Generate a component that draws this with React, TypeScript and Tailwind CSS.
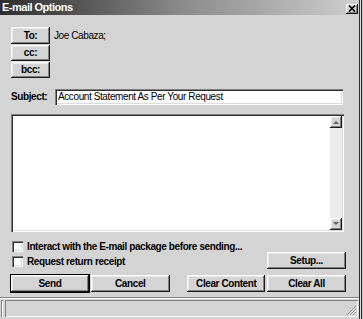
import React from "react";

const txt = "text-[10px] tracking-[-0.4px] leading-none";
const btn =
  "flex items-center justify-center bg-[#d4d4d4] text-black font-bold " +
  txt +
  " shadow-[inset_-1px_-1px_#1a1a1a,inset_1px_1px_#ffffff,inset_-2px_-2px_#808080,inset_2px_2px_#e8e8e8]";
const sunken =
  "bg-white shadow-[inset_1px_1px_#808080,inset_2px_2px_#303030,inset_-1px_-1px_#ffffff,inset_-2px_-2px_#dcdcdc]";

function CheckBox() {
  return <div className={"w-[11px] h-[11px] shrink-0 " + sunken} />;
}

export default function App() {
  return (
    <div
      className="w-[363px] h-[319px] flex bg-[#c8c8c8] overflow-hidden"
      style={{ fontFamily: '"Liberation Sans", Arial, sans-serif' }}
    >
      <div className="w-[360px] h-full flex flex-col bg-[#d4d4d4] border-r border-[#303030]">
        {/* Title bar */}
        <div className="h-[15px] flex items-center justify-between pl-[2px] pr-[1px] bg-gradient-to-r from-[#2e2e2e] via-[#8a8a8a] to-[#cfcfcf]">
          <span className={"text-white font-bold text-[11px] tracking-[-0.5px] leading-none"}>E-mail Options</span>
          <div className="w-[12px] h-[10px] mt-[2px] flex items-center justify-center bg-[#d4d4d4] shadow-[inset_-1px_-1px_#1a1a1a,inset_1px_1px_#ffffff,inset_-2px_-2px_#808080]">
            <svg width="8" height="7" viewBox="0 0 8 7">
              <path d="M1 0.5 L7 6.5 M7 0.5 L1 6.5" stroke="#000" strokeWidth="1.6" />
            </svg>
          </div>
        </div>

        <div className="flex-1 flex flex-col pl-[11px] pr-[13px]">
          {/* Recipients */}
          <div className="mt-[12px] flex">
            <div className="w-[39px] flex flex-col gap-[1px]">
              <div className={btn + " h-[17px]"}>To:</div>
              <div className={btn + " h-[16px]"}>cc:</div>
              <div className={btn + " h-[16px]"}>bcc:</div>
            </div>
            <div className={"ml-[4px] mt-[4px] text-black " + txt}>Joe Cabaza;</div>
          </div>

          {/* Subject */}
          <div className="mt-[11px] flex items-center h-[16px]">
            <div className={"w-[44px] font-bold text-black " + txt}>Subject:</div>
            <div className={"flex-1 h-[16px] mr-[3px] flex items-center pl-[3px] text-black " + txt + " " + sunken}>
              Account Statement As Per Your Request
            </div>
          </div>

          {/* Body */}
          <div className={"mt-[9px] h-[118px] mr-[2px] flex justify-end p-[2px] " + sunken}>
            <div className="w-[12px] h-full flex flex-col bg-[#ececec]">
              <div className={btn + " h-[12px] w-[12px]"}>
                <svg width="6" height="4" viewBox="0 0 6 4">
                  <path d="M0 4 L3 1 L6 4 Z" fill="#606060" />
                </svg>
              </div>
              <div className="flex-1" />
              <div className={btn + " h-[12px] w-[12px]"}>
                <svg width="6" height="4" viewBox="0 0 6 4">
                  <path d="M0 0 L3 3 L6 0 Z" fill="#606060" />
                </svg>
              </div>
            </div>
          </div>

          {/* Options */}
          <div className="mt-[9px] flex justify-between">
            <div className="flex flex-col gap-[4px] pl-[1px]">
              <div className="flex items-center gap-[4px] h-[11px]">
                <CheckBox />
                <span className={"font-bold text-black " + txt}>
                  Interact with the E-mail package before sending...
                </span>
              </div>
              <div className="flex items-center gap-[4px] h-[11px]">
                <CheckBox />
                <span className={"font-bold text-black " + txt}>Request return receipt</span>
              </div>
            </div>
          </div>
          <div className="-mt-[15px] flex justify-end">
            <div className={btn + " w-[79px] h-[17px]"}>Setup...</div>
          </div>

          {/* Buttons */}
          <div className="mt-[6px] flex justify-between">
            <div className={btn + " w-[78px] h-[17px] outline outline-1 outline-black"}>Send</div>
            <div className={btn + " w-[79px] h-[17px]"}>Cancel</div>
            <div className="w-[14px]" />
            <div className={btn + " w-[78px] h-[17px]"}>Clear Content</div>
            <div className={btn + " w-[79px] h-[17px]"}>Clear All</div>
          </div>
        </div>

        {/* Status bar */}
        <div className="h-[22px] flex flex-col border-t border-[#808080]">
          <div className="h-px bg-white" />
          <div className="flex-1 flex items-stretch pt-[1px] pb-[2px] px-[1px] gap-[2px]">
            <div className="w-[2px] shadow-[inset_1px_1px_#808080,inset_-1px_-1px_#ffffff]" />
            <div className="flex-1 shadow-[inset_1px_1px_#808080,inset_-1px_-1px_#ffffff] relative">
              <svg className="absolute right-[1px] bottom-[1px]" width="11" height="11" viewBox="0 0 11 11">
                <path d="M10 1 L1 10 M10 4 L4 10 M10 7 L7 10" stroke="#808080" strokeWidth="1" />
                <path d="M10 2 L2 10 M10 5 L5 10 M10 8 L8 10" stroke="#ffffff" strokeWidth="1" />
              </svg>
            </div>
          </div>
        </div>
      </div>
      <div className="flex-1 flex">
        <div className="w-[1px] bg-[#e0e0e0]" />
        <div className="w-[1px] bg-[#202020]" />
      </div>
    </div>
  );
}
